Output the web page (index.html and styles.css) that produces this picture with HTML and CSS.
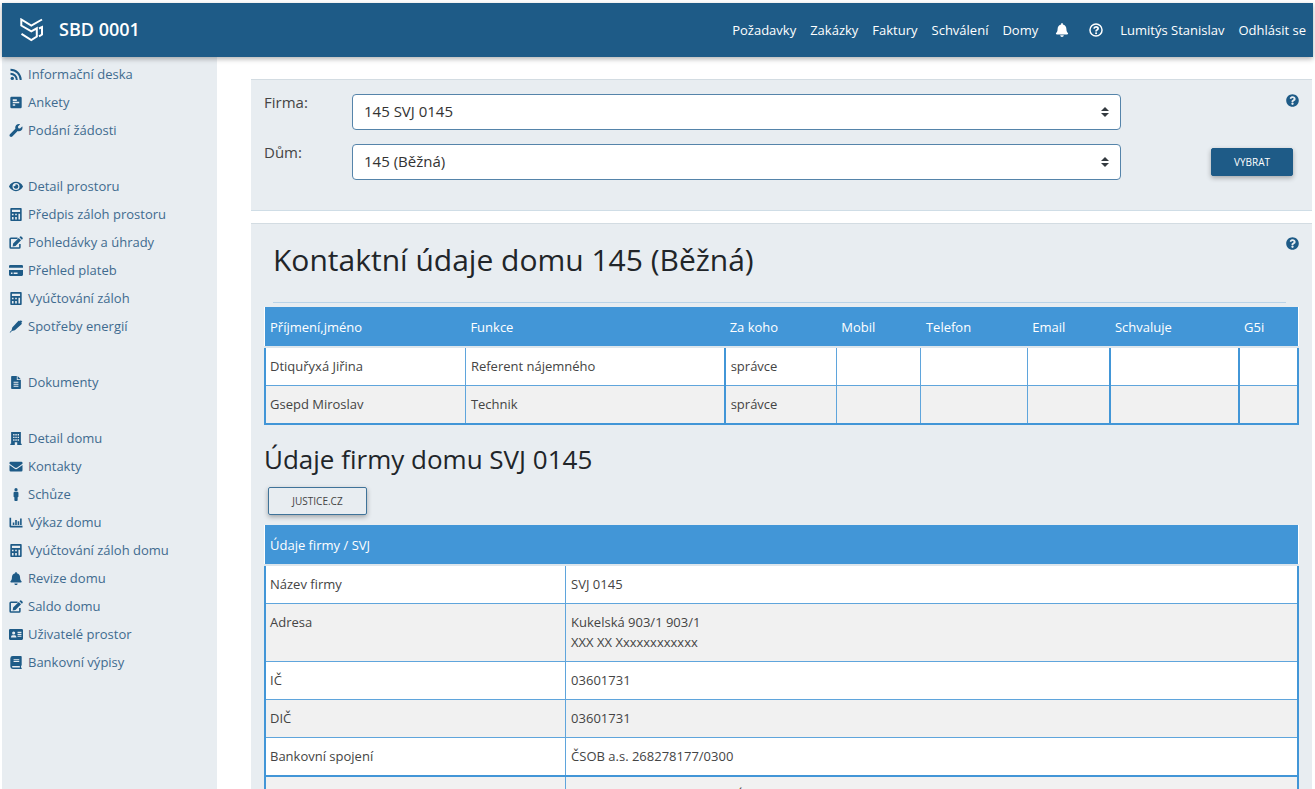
FILE: index.html
```html
<!DOCTYPE html>
<html lang="cs">
<head>
  <meta charset="UTF-8" />
  <meta name="viewport" content="width=device-width, initial-scale=1" />
  <title>SBD 0001</title>
  <link rel="stylesheet" href="styles.css">
</head>
<body>
  <!-- Icon set -->
  <svg class="icon-defs" aria-hidden="true">
    <symbol id="i-rss" viewBox="0 0 16 16">
      <circle cx="3.4" cy="12.8" r="2.1"/>
      <path d="M1.2 7a7.8 7.8 0 0 1 7.8 7.8M1.2 2.2a12.6 12.6 0 0 1 12.6 12.6" fill="none" stroke="currentColor" stroke-width="2.4"/>
    </symbol>
    <symbol id="i-poll" viewBox="0 0 16 16">
      <path fill-rule="evenodd" d="M2.500 1h11A1.500 1.500 0 0 1 15 2.500v11a1.500 1.500 0 0 1-1.500 1.500h-11A1.500 1.500 0 0 1 1 13.500v-11A1.500 1.500 0 0 1 2.500 1zM4 4v2h5V4zM4 7v2h8V7zM4 10v2h3v-2z"/>
    </symbol>
    <symbol id="i-wrench" viewBox="0 0 512 512">
      <path d="M507.73 109.1c-2.24-9.03-13.54-12.09-20.12-5.51l-74.36 74.36-67.88-11.31-11.31-67.88 74.36-74.36c6.62-6.62 3.43-17.9-5.66-20.16-47.38-11.74-99.55.91-136.58 37.93-39.64 39.64-50.55 97.1-34.05 147.2L18.74 402.76c-24.99 24.99-24.99 65.51 0 90.5 24.99 24.99 65.51 24.99 90.5 0l213.21-213.21c50.12 16.71 107.47 5.68 147.37-34.22 37.07-37.07 49.7-89.32 37.91-136.73z"/>
    </symbol>
    <symbol id="i-eye" viewBox="0 0 576 512">
      <path d="M572.52 241.4C518.29 135.59 410.93 64 288 64S57.68 135.64 3.48 241.41a32.35 32.35 0 0 0 0 29.19C57.71 376.41 165.07 448 288 448s230.32-71.64 284.52-177.41a32.35 32.35 0 0 0 0-29.19zM288 400a144 144 0 1 1 144-144 143.93 143.93 0 0 1-144 144zm0-240a95.31 95.31 0 0 0-25.31 3.79 47.85 47.85 0 0 1-66.9 66.9A95.78 95.78 0 1 0 288 160z"/>
    </symbol>
    <symbol id="i-calc" viewBox="0 0 16 16">
      <path fill-rule="evenodd" d="M2 0h12a1 1 0 0 1 1 1v14a1 1 0 0 1-1 1H2a1 1 0 0 1-1-1V1a1 1 0 0 1 1-1zM3 2v3h10V2zM3 7v2h2V7zM7 7v2h2V7zM3 11v3h2v-3zM7 11v3h2v-3zM11 7v7h2V7z"/>
    </symbol>
    <symbol id="i-edit" viewBox="0 0 18 16">
      <path d="M11 2.500H2.500a1 1 0 0 0-1 1V14a1 1 0 0 0 1 1H13a1 1 0 0 0 1-1V10" fill="none" stroke="currentColor" stroke-width="2"/>
      <path d="M12.500 2.200l3 3-7.200 7.200-3.600.6.600-3.600zM13.400 1.300l1-1q.7-.5 1.400 0l1.700 1.700q.5.700 0 1.400l-1 1z"/>
    </symbol>
    <symbol id="i-card" viewBox="0 0 18 16">
      <path fill-rule="evenodd" d="M1.500 1h15A1.500 1.500 0 0 1 18 2.500V4.500H0V2.500A1.500 1.500 0 0 1 1.500 1zM0 7.500h18v6a1.500 1.500 0 0 1-1.500 1.500h-15A1.500 1.500 0 0 1 0 13.500zM2.500 10.500V12.500h2v-2zM6 10.500V12.500h5v-2z"/>
    </symbol>
    <symbol id="i-quill" viewBox="0 0 16 16">
      <path d="M10.500 1.500l1.300-.8.800.8L14 .2l1.800 1.800-1.400 1.500.9.800-.8 1.300-8 7-3.500.8L.8 15.800l-.6-.6L2.600 12.600l.8-3.500z"/>
    </symbol>
    <symbol id="i-file" viewBox="0 0 16 16">
      <path fill-rule="evenodd" d="M3 0h6v5h5v10a1 1 0 0 1-1 1H3a1 1 0 0 1-1-1V1a1 1 0 0 1 1-1zM10 0l4 4h-4zM5 7v1.300h6V7zM5 9.500v1.300h6V9.500zM5 12v1.300h6V12z"/>
    </symbol>
    <symbol id="i-building" viewBox="0 0 16 16">
      <path fill-rule="evenodd" d="M2 0h12v14.500h1V16H9.500v-3.500h-3V16H1v-1.500h1zM4.500 2.500v1.700h1.700V2.500zM7.200 2.500v1.700h1.700V2.500zM10 2.500v1.700h1.700V2.500zM4.500 5.700v1.700h1.700V5.700zM7.200 5.700v1.700h1.700V5.700zM10 5.700v1.700h1.700V5.700zM4.500 9v1.700h1.700V9zM7.200 9v1.700h1.700V9zM10 9v1.700h1.700V9z"/>
    </symbol>
    <symbol id="i-mail" viewBox="0 0 16 16">
      <path d="M1.500 2h13A1.500 1.500 0 0 1 16 3.500v1L9.500 9.200q-1.500 1-3 0L0 4.500v-1A1.500 1.500 0 0 1 1.500 2zM0 6.300l6 4.300q2 1.300 4 0l6-4.300v6.200a1.500 1.500 0 0 1-1.500 1.500h-13A1.500 1.500 0 0 1 0 12.500z"/>
    </symbol>
    <symbol id="i-person" viewBox="0 0 16 16">
      <circle cx="8" cy="2" r="2"/>
      <path d="M6.500 4.500h3A1.500 1.500 0 0 1 11 6v4.500a1 1 0 0 1-1 1V15a1 1 0 0 1-1 1H7a1 1 0 0 1-1-1v-3.500a1 1 0 0 1-1-1V6a1.500 1.500 0 0 1 1.500-1.500z"/>
    </symbol>
    <symbol id="i-chart" viewBox="0 0 16 16">
      <path d="M0 2h2v10h14v2H1a1 1 0 0 1-1-1zM4 8h2v3H4zM7 5h2v6H7zM10 6.500h2V11h-2zM13 3h2v8h-2z"/>
    </symbol>
    <symbol id="i-bell" viewBox="0 0 448 512">
      <path d="M224 512c35.32 0 63.97-28.65 63.97-64H160.03c0 35.35 28.65 64 63.97 64zm215.39-149.71c-19.32-20.76-55.47-51.99-55.47-154.29 0-77.7-54.48-139.9-127.94-155.16V32c0-17.67-14.32-32-31.98-32s-31.98 14.33-31.98 32v20.84C118.56 68.1 64.08 130.3 64.08 208c0 102.3-36.15 133.53-55.47 154.29-6 6.45-8.66 14.16-8.61 21.71.11 16.4 12.98 32 32.1 32h383.8c19.12 0 32-15.6 32.1-32 .05-7.55-2.61-15.27-8.61-21.71z"/>
    </symbol>
    <symbol id="i-idcard" viewBox="0 0 18 16">
      <path fill-rule="evenodd" d="M1.500 1h15A1.500 1.500 0 0 1 18 2.500v11a1.500 1.500 0 0 1-1.500 1.500h-15A1.500 1.500 0 0 1 0 13.500v-11A1.500 1.500 0 0 1 1.500 1zM6 4a2 2 0 1 0 0 4 2 2 0 0 0 0-4zM2.500 12h7q0-3-2-3h-3q-2 0-2 3zM11 4.500V6h5V4.500zM11 7v1.500h5V7zM11 9.500V11h5V9.500z"/>
    </symbol>
    <symbol id="i-book" viewBox="0 0 16 16">
      <path fill-rule="evenodd" d="M4 0h10a1 1 0 0 1 1 1v10.500l-.8.8v1.700l.8.700V16H4a3 3 0 0 1-3-3V3a3 3 0 0 1 3-3zM5 4v1.200h7V4zM5 6.300v1.200h7V6.300zM4 12.200a.9.900 0 0 0 0 1.800h8.700v-1.800z"/>
    </symbol>
    <symbol id="i-help" viewBox="0 0 512 512">
      <path d="M504 256c0 136.997-111.043 248-248 248S8 392.997 8 256C8 119.083 119.043 8 256 8s248 111.083 248 248zM262.655 90c-54.497 0-89.255 22.957-116.549 63.758-3.536 5.286-2.353 12.415 2.715 16.258l34.699 26.31c5.205 3.947 12.621 3.008 16.665-2.122 17.864-22.658 30.113-35.797 57.303-35.797 20.429 0 45.698 13.148 45.698 32.958 0 14.976-12.363 22.667-32.534 33.976C247.128 238.528 216 254.941 216 296v4c0 6.627 5.373 12 12 12h56c6.627 0 12-5.373 12-12v-1.333c0-28.462 83.186-29.647 83.186-106.667 0-58.002-60.165-102-116.531-102zM256 338c-25.365 0-46 20.635-46 46 0 25.364 20.635 46 46 46s46-20.636 46-46c0-25.364-20.635-46-46-46z"/>
    </symbol>
    <symbol id="i-help-o" viewBox="0 0 16 16">
      <circle cx="8" cy="8" r="6.900" fill="none" stroke="currentColor" stroke-width="1.700"/>
      <path d="M5.700 6.300C5.900 4.900 6.800 4.300 8 4.300c1.400 0 2.400.8 2.400 2S9.300 7.900 8.700 8.300c-.5.300-.6.600-.6 1.300" fill="none" stroke="currentColor" stroke-width="2"/>
      <circle cx="8.100" cy="11.700" r="1.200"/>
    </symbol>
  </svg>

  <header class="topbar">
    <a class="brand" href="#">
      <svg class="logo" viewBox="0 0 24 24" aria-hidden="true">
        <path d="M22 1.500L11.300 7.500 1.300 1.500V7.500L11.300 13.300 16.800 10.300V18.500L11.300 22 1.500 15.800M19 10.500l3-1.500v7.500l-3 1.800"/>
      </svg>
      <span>SBD 0001</span>
    </a>
    <nav class="topnav">
      <a href="#">Požadavky</a>
      <a href="#">Zakázky</a>
      <a href="#">Faktury</a>
      <a href="#">Schválení</a>
      <a href="#">Domy</a>
      <a class="nav-icon" href="#" aria-label="Upozornění"><svg><use href="#i-bell"/></svg></a>
      <a class="nav-icon" href="#" aria-label="Nápověda"><svg><use href="#i-help-o"/></svg></a>
      <a href="#">Lumitýs Stanislav</a>
      <a href="#">Odhlásit se</a>
    </nav>
  </header>

  <div class="layout">
    <aside class="sidebar">
      <ul>
        <li><a href="#"><svg><use href="#i-rss"/></svg>Informační deska</a></li>
        <li><a href="#"><svg><use href="#i-poll"/></svg>Ankety</a></li>
        <li><a href="#"><svg><use href="#i-wrench"/></svg>Podání žádosti</a></li>
      </ul>
      <ul>
        <li><a href="#"><svg><use href="#i-eye"/></svg>Detail prostoru</a></li>
        <li><a href="#"><svg><use href="#i-calc"/></svg>Předpis záloh prostoru</a></li>
        <li><a href="#"><svg><use href="#i-edit"/></svg>Pohledávky a úhrady</a></li>
        <li><a href="#"><svg><use href="#i-card"/></svg>Přehled plateb</a></li>
        <li><a href="#"><svg><use href="#i-calc"/></svg>Vyúčtování záloh</a></li>
        <li><a href="#"><svg><use href="#i-quill"/></svg>Spotřeby energií</a></li>
      </ul>
      <ul>
        <li><a href="#"><svg><use href="#i-file"/></svg>Dokumenty</a></li>
      </ul>
      <ul>
        <li><a href="#"><svg><use href="#i-building"/></svg>Detail domu</a></li>
        <li><a href="#"><svg><use href="#i-mail"/></svg>Kontakty</a></li>
        <li><a href="#"><svg><use href="#i-person"/></svg>Schůze</a></li>
        <li><a href="#"><svg><use href="#i-chart"/></svg>Výkaz domu</a></li>
        <li><a href="#"><svg><use href="#i-calc"/></svg>Vyúčtování záloh domu</a></li>
        <li><a href="#"><svg><use href="#i-bell"/></svg>Revize domu</a></li>
        <li><a href="#"><svg><use href="#i-edit"/></svg>Saldo domu</a></li>
        <li><a href="#"><svg><use href="#i-idcard"/></svg>Uživatelé prostor</a></li>
        <li><a href="#"><svg><use href="#i-book"/></svg>Bankovní výpisy</a></li>
      </ul>
    </aside>

    <main class="content">
      <form class="panel filter">
        <label for="firma">Firma:</label>
        <select id="firma" name="firma">
          <option>145 SVJ 0145</option>
        </select>
        <a class="help" href="#" aria-label="Nápověda"><svg><use href="#i-help"/></svg></a>

        <label for="dum">Dům:</label>
        <select id="dum" name="dum">
          <option>145 (Běžná)</option>
        </select>
        <button type="button" class="btn btn-primary">VYBRAT</button>
      </form>

      <section class="panel details">
        <div class="panel-head">
          <h1>Kontaktní údaje domu 145 (Běžná)</h1>
          <a class="help" href="#" aria-label="Nápověda"><svg><use href="#i-help"/></svg></a>
        </div>

        <table class="grid contacts">
          <colgroup>
            <col class="c-name"><col class="c-role"><col class="c-for"><col class="c-mobile">
            <col class="c-phone"><col class="c-email"><col class="c-approve"><col class="c-g5i">
          </colgroup>
          <thead>
            <tr>
              <th>Příjmení,jméno</th>
              <th>Funkce</th>
              <th>Za koho</th>
              <th>Mobil</th>
              <th>Telefon</th>
              <th>Email</th>
              <th>Schvaluje</th>
              <th>G5i</th>
            </tr>
          </thead>
          <tbody>
            <tr><td>Dtiquřyxá Jiřina</td><td>Referent nájemného</td><td>správce</td><td></td><td></td><td></td><td></td><td></td></tr>
            <tr><td>Gsepd Miroslav</td><td>Technik</td><td>správce</td><td></td><td></td><td></td><td></td><td></td></tr>
          </tbody>
        </table>

        <h2>Údaje firmy domu SVJ 0145</h2>
        <button type="button" class="btn btn-outline">JUSTICE.CZ</button>

        <table class="grid company">
          <colgroup><col class="c-label"><col></colgroup>
          <thead>
            <tr><th colspan="2">Údaje firmy / SVJ</th></tr>
          </thead>
          <tbody>
            <tr><td>Název firmy</td><td>SVJ 0145</td></tr>
            <tr><td>Adresa</td><td>Kukelská 903/1 903/1<br>XXX XX Xxxxxxxxxxxx</td></tr>
            <tr><td>IČ</td><td>03601731</td></tr>
            <tr><td>DIČ</td><td>03601731</td></tr>
            <tr><td>Bankovní spojení</td><td>ČSOB a.s. 268278177/0300</td></tr>
            <tr class="group-start"><td>Obchodní rejstřík</td><td>Zápis do seznamu soudu v Ústí nad Labem</td></tr>
          </tbody>
        </table>
      </section>
    </main>
  </div>
</body>
</html>
```
FILE: styles.css
```css
* {
  box-sizing: border-box;
}
body {
  margin: 0;
  padding: 3px 2px 0;
  height: 100vh;
  display: flex;
  flex-direction: column;
  overflow: hidden;
  font-family: "Open Sans", "Noto Sans", sans-serif;
  font-size: 13px;
  color: #444;
  background: #fff;
}
a {
  color: inherit;
  text-decoration: none;
}
svg {
  fill: currentColor;
}
.icon-defs {
  display: none;
}

/* Header */
.topbar {
  flex: none;
  display: flex;
  align-items: center;
  justify-content: space-between;
  height: 54px;
  padding: 0 7px 0 18px;
  background: #1e5b87;
  color: #fff;
  box-shadow: 0 2px 5px rgba(0,0,0,0.3);
  z-index: 1;
}
.brand {
  display: flex;
  align-items: center;
  gap: 15px;
  padding-bottom: 3px;
  font-size: 18px;
  font-weight: 600;
}
.logo {
  width: 24px;
  height: 24px;
  margin-top: 3px;
  fill: none;
  stroke: #fff;
  stroke-width: 2;
}
.topnav {
  display: flex;
  align-items: center;
  gap: 14px;
}
.nav-icon {
  display: flex;
  justify-content: center;
  width: 20px;
}
.nav-icon svg {
  width: 14px;
  height: 14px;
}

/* Sidebar */
.layout {
  flex: 1;
  min-height: 0;
  display: flex;
}
.sidebar {
  flex: none;
  width: 215px;
  padding: 3px 7px;
  background: #e8edf1;
  color: #3f6b8f;
}
.sidebar ul {
  list-style: none;
  margin: 0 0 28px;
  padding: 0;
}
.sidebar a {
  display: flex;
  align-items: center;
  gap: 5px;
  line-height: 28px;
}
.sidebar svg {
  width: 14px;
  height: 13px;
  color: #1e5b87;
}

/* Content */
.content {
  flex: 1;
  min-width: 0;
  padding: 22px 1px 0 34px;
}
.panel {
  padding: 0 13px;
  background: #e8edf1;
  border-top: 1px solid #d3dce2;
  border-bottom: 1px solid #cfdde6;
}
.filter {
  display: grid;
  grid-template-columns: 88px 1fr 178px;
  row-gap: 14px;
  align-items: start;
  padding-top: 14px;
  padding-bottom: 30px;
  margin-bottom: 12px;
}
.filter label {
  font-size: 15px;
  line-height: 17px;
}
.filter select {
  appearance: none;
  width: 100%;
  height: 36px;
  padding: 0 11px 2px;
  border: 1px solid #5584aa;
  border-radius: 4px;
  font-family: inherit;
  font-size: 15px;
  color: #333;
  background: #fff url("data:image/svg+xml,%3Csvg xmlns='http://www.w3.org/2000/svg' viewBox='0 0 8 10'%3E%3Cpath fill='%23343a40' d='M4 0l4 4H0zM4 10l4-4H0z'/%3E%3C/svg%3E") no-repeat right 11px center / 8px 10px;
}
.help {
  justify-self: end;
  display: flex;
  color: #1e5b87;
}
.help svg {
  width: 13px;
  height: 13px;
}
.btn {
  height: 28px;
  border-radius: 2px;
  border: 1px solid #1e5b87;
  font-family: inherit;
  font-size: 10px;
  box-shadow: 0 2px 5px rgba(0,0,0,0.3);
  cursor: pointer;
}
.btn-primary {
  justify-self: end;
  align-self: center;
  width: 82px;
  margin-right: 6px;
  background: #1e5b87;
  color: #fff;
}
.btn-outline {
  width: 99px;
  margin: 0 4px 10px;
  background: transparent;
  border-color: #3f7399;
  color: #444;
}
.panel-head {
  display: flex;
  align-items: flex-start;
  justify-content: space-between;
  margin-left: 9px;
}
.panel-head h1 {
  flex: 1;
  margin: 0 0 4px;
  padding: 16px 0 22px;
  border-bottom: 1px solid #b9d3e8;
  font-size: 30px;
  font-weight: 400;
  line-height: 40px;
  color: #212529;
}
.panel-head .help {
  padding-top: 13px;
}
h2 {
  margin: 17px 0 11px;
  font-size: 26px;
  font-weight: 400;
  line-height: 34px;
  color: #212529;
}

/* Tables */
.grid {
  width: 100%;
  table-layout: fixed;
  border-collapse: collapse;
  line-height: 20px;
  background: #fff;
}
.grid th {
  padding: 10px 5px 9px;
  background: #4296d7;
  border-bottom: 2px solid #dee6ec;
  color: #fff;
  font-weight: 400;
  text-align: left;
}
.grid td {
  padding: 8px 5px 9px;
  border: 1px solid #5fa5dc;
  vertical-align: top;
}
.grid td:first-child {
  padding-left: 4px;
}
.grid tbody tr {
  border-left: 2px solid #4296d7;
  border-right: 2px solid #4296d7;
}
.grid tbody tr:nth-child(even) {
  background: #f1f1f1;
}
.grid tbody tr:last-child td {
  border-bottom: 2px solid #4296d7;
}
.grid .group-start td {
  border-top: 2px solid #4296d7;
}
.contacts td:nth-child(3),
.contacts td:nth-child(7),
.contacts td:nth-child(8) {
  border-left: 2px solid #4296d7;
}
.c-name { width: 19.4%; }
.c-role { width: 25.1%; }
.c-for { width: 10.8%; }
.c-mobile { width: 8.2%; }
.c-phone { width: 10.3%; }
.c-email { width: 8%; }
.c-approve { width: 12.5%; }
.c-g5i { width: 5.7%; }
.c-label { width: 29.1%; }
```
